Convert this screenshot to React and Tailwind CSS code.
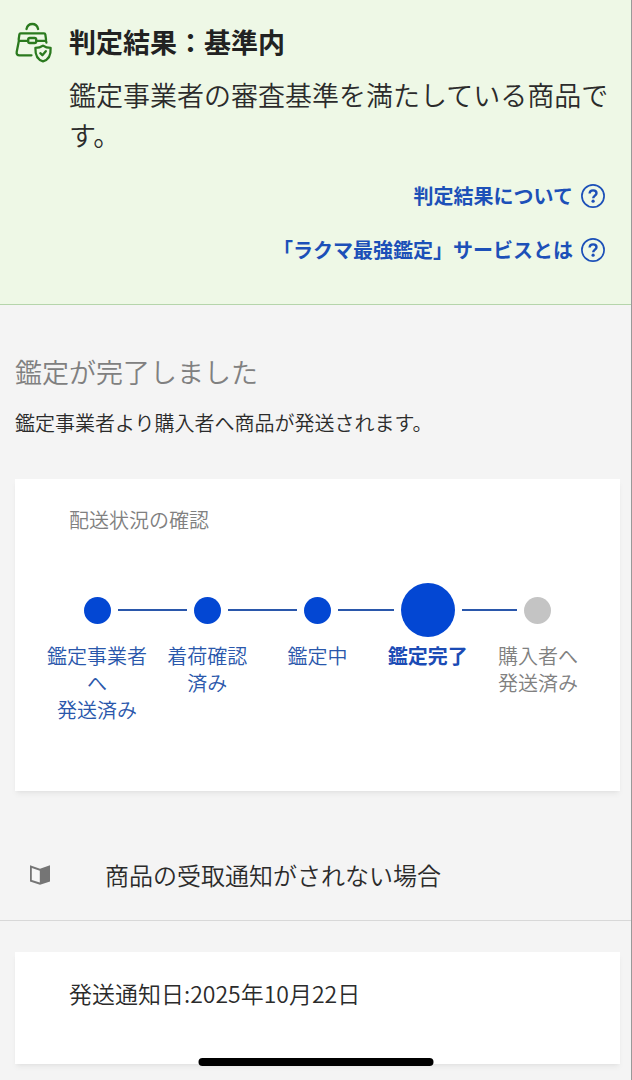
const steps = [
  { lines: ["鑑定事業者へ", "発送済み"], state: "done" },
  { lines: ["着荷確認", "済み"], state: "done" },
  { lines: ["鑑定中"], state: "done" },
  { lines: ["鑑定完了"], state: "current" },
  { lines: ["購入者へ", "発送済み"], state: "todo" },
];

const dotStyles = {
  done: "size-[27px] bg-[#0347d3]",
  current: "size-[54px] bg-[#0347d3]",
  todo: "size-[27px] bg-[#c4c4c4]",
};

const labelStyles = {
  done: "text-[#2a57ab]",
  current: "font-bold text-[#1b4bb5]",
  todo: "text-[#808080]",
};

function BagIcon() {
  return (
    <svg viewBox="0 0 38 42" className="h-[42px] w-[38px] shrink-0" fill="none" stroke="#2b7a1f" strokeWidth="2.3" strokeLinecap="round" strokeLinejoin="round" aria-hidden="true">
      <path d="M11.5 7C12.3 3.6 14.6 2 17.3 2S22.3 3.6 23.1 7" />
      <path d="M13 18.8H5C4 18.8 3.6 18.2 3.7 17.2L4.4 12.4C4.5 11.6 4.8 11.3 5.6 11.3H29C29.8 11.3 30.2 11.6 30.3 12.4L31 17.2C31.1 18.2 30.7 18.8 29.7 18.8H22" />
      <rect x="13.2" y="16" width="8" height="5" rx="1.6" />
      <path d="M3.9 18.8L1.7 29.9C1.3 32.1 2.4 33.3 4.4 33.3H16.5" />
      <path d="M31 18.8L31.4 20.6" />
      <path d="M28 23.6C25.7 25.3 23.2 25.9 20.4 25.9C20.2 32.2 21.4 37.6 28 39.3C34.6 37.6 36 32.2 35.6 25.9C32.8 25.9 30.3 25.3 28 23.6Z" />
      <path d="M25.3 31.2L27.4 33.2L30.8 29.2" />
    </svg>
  );
}

function HelpIcon() {
  return (
    <svg viewBox="0 0 24 24" className="size-6 shrink-0" fill="none" stroke="#1c50b8" aria-hidden="true">
      <circle cx="12" cy="12" r="11.1" strokeWidth="1.7" />
      <path d="M8.6 9.5C8.7 7.5 10.1 6.4 12.1 6.4C14.1 6.4 15.5 7.6 15.5 9.3C15.5 11.6 12.2 11.7 12.2 14.3" strokeWidth="2.4" />
      <circle cx="12.1" cy="17.2" r="1.6" fill="#1c50b8" stroke="none" />
    </svg>
  );
}

function BookIcon() {
  return (
    <svg viewBox="0 0 20 20" className="size-5 shrink-0" aria-hidden="true">
      <path d="M0 0.3L10 3.8L20 0.3V16.4L10 19.8L0 16.4Z" fill="#757575" />
      <path d="M1.8 3L9.8 5.7V17.6L1.8 14.9Z" fill="#f7f7f7" />
    </svg>
  );
}

function HelpLink({ children }) {
  return (
    <a href="#" className="flex items-center gap-2 text-[20px] leading-[30px] font-bold text-[#1c50b8]">
      {children}
      <HelpIcon />
    </a>
  );
}

export default function App() {
  return (
    <div className="relative border-r border-[#999] bg-[#f4f4f4] font-['Noto_Sans_CJK_JP',sans-serif] font-[350] text-[#2b2b2b]">
      <section className="border-b border-[#b5d5ab] bg-[#eef8e6] pt-[22px] pb-[39px]">
        <div className="flex gap-4 pr-5 pl-[15px]">
          <BagIcon />
          <div>
            <h1 className="text-[27px] leading-10 font-bold text-[#222]">判定結果：基準内</h1>
            <p className="mt-[13px] text-[27px] leading-10">鑑定事業者の審査基準を満たしている商品です。</p>
          </div>
        </div>
        <div className="mt-[26px] flex flex-col items-end gap-6 pr-[26px]">
          <HelpLink>判定結果について</HelpLink>
          <HelpLink>「ラクマ最強鑑定」サービスとは</HelpLink>
        </div>
      </section>

      <section className="pt-[47px] pr-[11px] pl-[15px]">
        <h2 className="text-[27px] leading-10 text-[#808080]">鑑定が完了しました</h2>
        <p className="mt-4 text-[20px] leading-[30px]">鑑定事業者より購入者へ商品が発送されます。</p>

        <div className="mt-[41px] bg-white px-[27px] pt-[26px] pb-[68px] shadow-md shadow-black/5">
          <h3 className="pl-[27px] text-[20px] leading-[30px] text-[#808080]">配送状況の確認</h3>
          <ol className="mt-12 grid grid-cols-5">
            {steps.map((step, i) => (
              <li key={step.lines.join("")} className="text-center">
                <div className="flex h-[54px] items-center gap-[7px]">
                  <span className={i > 0 ? "h-[2px] flex-1 bg-[#2a57ab]" : "flex-1"} />
                  <span className={`rounded-full ${dotStyles[step.state]}`} />
                  <span className={i < steps.length - 1 ? "h-[2px] flex-1 bg-[#2a57ab]" : "flex-1"} />
                </div>
                <div className={`mt-[5px] text-[20px] leading-[27px] ${labelStyles[step.state]}`}>
                  {step.lines.map((line) => (
                    <p key={line}>{line}</p>
                  ))}
                </div>
              </li>
            ))}
          </ol>
        </div>
      </section>

      <a href="#" className="mt-[39px] flex items-center border-b border-[#d8d8d8] px-[30px] py-[30px]">
        <BookIcon />
        <span className="pl-[55px] text-[24px] leading-[30px]">商品の受取通知がされない場合</span>
      </a>

      <section className="pt-[31px] pr-[11px] pb-4 pl-[15px]">
        <div className="bg-white px-[54px] pt-[26px] pb-14 shadow-md shadow-black/5">
          <p className="text-[23px] leading-[30px]">発送通知日:2025年10月22日</p>
        </div>
      </section>

      {/* home indicator */}
      <div className="absolute bottom-[14px] left-1/2 h-2 w-[235px] -translate-x-1/2 rounded-full bg-black" />
    </div>
  );
}
